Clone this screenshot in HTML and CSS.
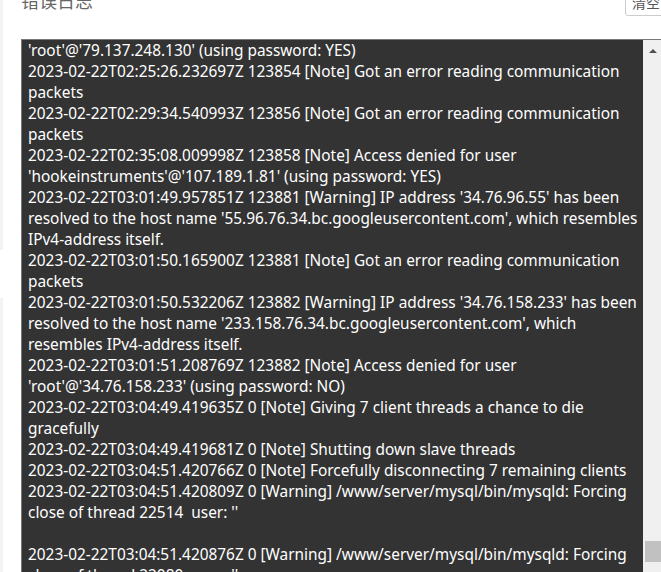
FILE: index.html
```html
<!DOCTYPE html>
<html>
<head>
    <title>错误日志</title>
    <link rel="stylesheet" href="styles.css">
</head>
<body>
    <div class="page">
        <div class="side-edge">
            <div class="edge-block top"></div>
            <div class="edge-block bottom"></div>
        </div>
        <div class="main">
            <div class="header">
                <h3 class="title">错误日志</h3>
                <button class="btn">清空日志</button>
            </div>
            <div class="log-box">
                <div class="log-text">'root'@'79.137.248.130' (using password: YES)
2023-02-22T02:25:26.232697Z 123854 [Note] Got an error reading communication packets
2023-02-22T02:29:34.540993Z 123856 [Note] Got an error reading communication packets
2023-02-22T02:35:08.009998Z 123858 [Note] Access denied for user 'hookeinstruments'@'107.189.1.81' (using password: YES)
2023-02-22T03:01:49.957851Z 123881 [Warning] IP address '34.76.96.55' has been resolved to the host name '55.96.76.34.bc.googleusercontent.com', which resembles IPv4-address itself.
2023-02-22T03:01:50.165900Z 123881 [Note] Got an error reading communication packets
2023-02-22T03:01:50.532206Z 123882 [Warning] IP address '34.76.158.233' has been resolved to the host name '233.158.76.34.bc.googleusercontent.com', which resembles IPv4-address itself.
2023-02-22T03:01:51.208769Z 123882 [Note] Access denied for user 'root'@'34.76.158.233' (using password: NO)
2023-02-22T03:04:49.419635Z 0 [Note] Giving 7 client threads a chance to die gracefully
2023-02-22T03:04:49.419681Z 0 [Note] Shutting down slave threads
2023-02-22T03:04:51.420766Z 0 [Note] Forcefully disconnecting 7 remaining clients
2023-02-22T03:04:51.420809Z 0 [Warning] /www/server/mysql/bin/mysqld: Forcing close of thread 22514  user: ''

2023-02-22T03:04:51.420876Z 0 [Warning] /www/server/mysql/bin/mysqld: Forcing close of thread 22080  user: ''
</div>
                <div class="scrollbar">
                    <div class="arrow"></div>
                    <div class="thumb"></div>
                </div>
            </div>
        </div>
    </div>
</body>
</html>
```

FILE: styles.css
```css
html, body {
    margin: 0;
    padding: 0;
    background-color: #fff;
    overflow: hidden;
}
body {
    font-family: "Noto Sans", "Noto Sans CJK SC", sans-serif;
    width: 661px;
    height: 572px;
}
.page {
    display: flex;
    height: 572px;
}
.side-edge {
    width: 3px;
    display: flex;
    flex-direction: column;
    flex-shrink: 0;
}
.edge-block {
    background-color: #f3f3f3;
}
.edge-block.top {
    height: 250px;
}
.edge-block.bottom {
    margin-top: 48px;
    flex: 1;
}
.main {
    padding-left: 18px;
    flex: 1;
    min-width: 0;
}
.header {
    display: flex;
    justify-content: space-between;
    align-items: flex-start;
    height: 51px;
    margin-top: -12px;
    margin-right: -34px;
}
.title {
    margin: 0;
    padding-top: 3px;
    font-size: 18px;
    line-height: 20px;
    font-weight: normal;
    color: #666;
}
.btn {
    font-family: "Noto Sans CJK SC", sans-serif;
    font-size: 14px;
    color: #555;
    background: #fff;
    border: 1px solid #ccc;
    border-radius: 3px;
    padding: 0 6px;
    height: 28px;
    line-height: 26px;
}
.log-box {
    display: flex;
    width: 650px;
    height: 560px;
    background-color: #333;
    border-top: 1px solid #777;
    border-left: 1px solid #777;
    overflow: hidden;
}
.log-text {
    width: 612px;
    padding: 0 3px 0 6px;
    color: #fff;
    font-size: 15.4px;
    line-height: 21px;
    white-space: pre-wrap;
    flex-shrink: 0;
}
.scrollbar {
    width: 18px;
    background-color: #f0f0f0;
    display: flex;
    flex-direction: column;
    align-items: center;
    flex-shrink: 0;
}
.arrow {
    margin-top: 9px;
    margin-left: 1px;
    width: 0;
    height: 0;
    border-left: 4px solid transparent;
    border-right: 4px solid transparent;
    border-bottom: 4px solid #505050;
}
.thumb {
    margin-top: 488px;
    margin-left: 2px;
    width: 17px;
    height: 21px;
    background-color: #c1c1c1;
}
```
